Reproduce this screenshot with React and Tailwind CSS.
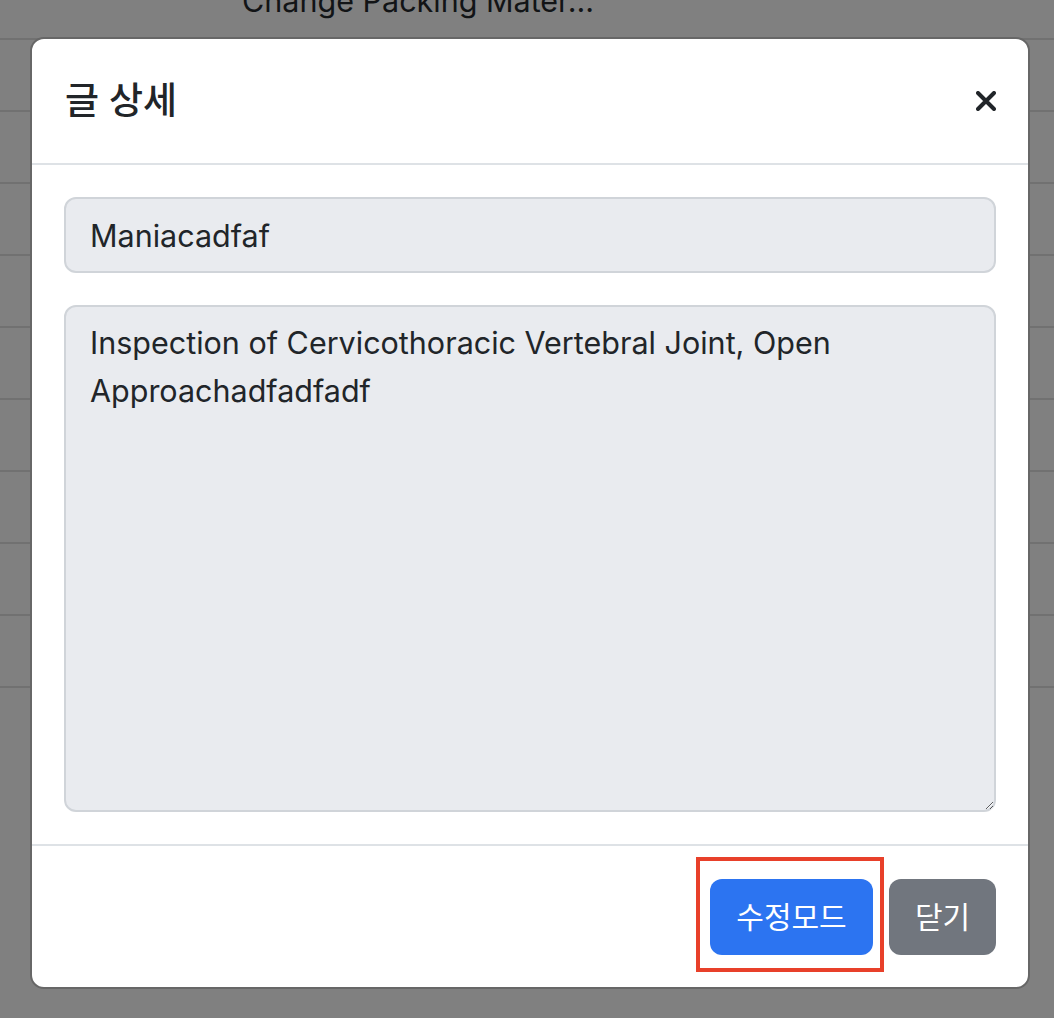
import React from "react";

const rows = Array.from({ length: 9 });

const CloseIcon = () => (
  <svg width="20" height="20" viewBox="0 0 20 20" fill="none">
    <path d="M2 2L18 18M18 2L2 18" stroke="#212529" strokeWidth="4" strokeLinecap="round" />
  </svg>
);

const App = () => {
  return (
    <div
      className="relative w-[1054px] h-[1018px] overflow-hidden bg-[#808080]"
      style={{ fontFamily: 'Inter, "Noto Sans CJK KR", sans-serif' }}
    >
      {/* page under the backdrop */}
      <div className="flex flex-col">
        <div className="h-[40px] border-b-2 border-[#717171] relative">
          <div className="pl-[242px] -mt-[19px] text-[30.5px] leading-[40px] text-[#121416]">
            Change Packing Mater...
          </div>
        </div>
        {rows.map((_, i) => (
          <div key={i} className="h-[72px] border-b-2 border-[#717171]" />
        ))}
      </div>

      {/* modal */}
      <div className="absolute left-[30px] top-[37px] w-[1000px] border-2 border-[#676767] rounded-[14px] bg-white flex flex-col">
        <div className="h-[126px] px-[32px] flex items-center justify-between border-b-2 border-[#dee2e6]">
          <h5 className="pl-[1px] text-[37px] font-medium text-[#212529]">글 상세</h5>
          <button className="w-[20px] h-[20px] flex items-center justify-center">
            <CloseIcon />
          </button>
        </div>

        <div className="p-[32px] flex flex-col gap-[32px]">
          <input
            readOnly
            value="Maniacadfaf"
            className="h-[76px] w-full px-[24px] border-2 border-[#d0d4d9] rounded-[12px] bg-[#e9ebef] text-[30.5px] text-[#212529] outline-none"
          />
          <textarea
            readOnly
            value="Inspection of Cervicothoracic Vertebral Joint, Open Approachadfadfadf"
            className="h-[507px] w-full px-[24px] py-[12px] border-2 border-[#d0d4d9] rounded-[12px] bg-[#e9ebef] text-[30.5px] leading-[48px] text-[#212529] outline-none"
          />
        </div>

        <div className="pt-[33px] pb-[32px] px-[32px] flex justify-end gap-[16px] border-t-2 border-[#dee2e6]">
          <div className="relative">
            <button className="w-[163px] h-[76px] rounded-[12px] bg-[#2c74f1] text-white text-[30px]">
              수정모드
            </button>
            <div className="absolute -left-[14px] -top-[22px] w-[188px] h-[115px] border-4 border-[#e8402a]" />
          </div>
          <button className="w-[107px] h-[76px] rounded-[12px] bg-[#71767e] text-white text-[30px]">
            닫기
          </button>
        </div>
      </div>
    </div>
  );
};

export default App;
